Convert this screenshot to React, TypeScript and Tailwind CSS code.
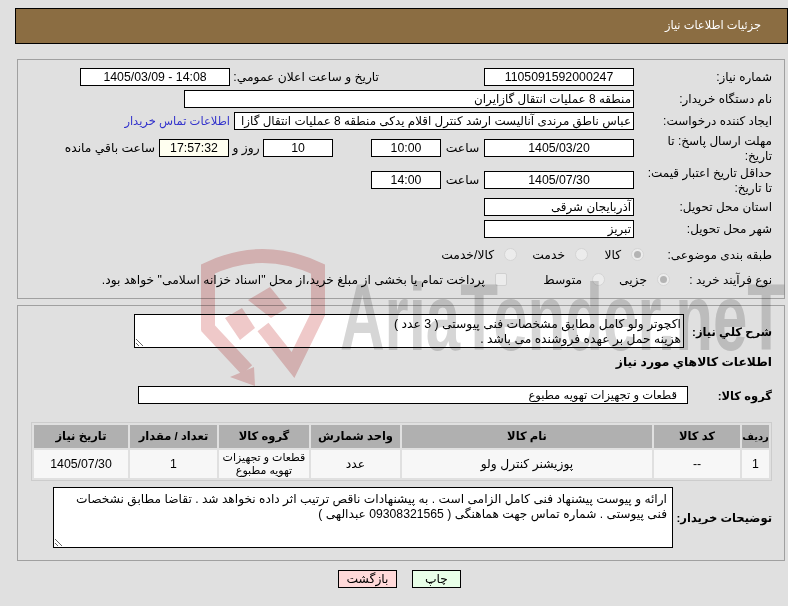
import React from "react";

const font = "font-['Liberation_Sans','DejaVu_Sans',sans-serif]";

function Box({ w, children, center, tint }: { w: string; children?: React.ReactNode; center?: boolean; tint?: boolean }) {
  return (
    <div
      className={`${w} h-[18px] shrink-0 overflow-hidden whitespace-nowrap border border-black px-[2px] leading-[17px] ${
        center ? "text-center" : "text-right text-[11.9px]"
      } ${tint ? "bg-[#fffff0]" : "bg-white"}`}
    >
      {children}
    </div>
  );
}

function Label({ w = "w-[138px]", children, bold }: { w?: string; children: React.ReactNode; bold?: boolean }) {
  return (
    <div className={`${w} shrink-0 whitespace-nowrap pt-[2px] leading-[15px] ${bold ? "text-[11.5px] font-bold" : "text-[12px]"}`}>
      {children}
    </div>
  );
}

function Radio({ checked }: { checked?: boolean }) {
  return (
    <span className="flex h-[13px] w-[13px] shrink-0 items-center justify-center rounded-full border border-[#d4d4d4] bg-[#ececec]">
      {checked && <span className="h-[7px] w-[7px] rounded-full bg-[#b4b4b4]" />}
    </span>
  );
}

function Option({ w, checked, children }: { w: string; checked?: boolean; children: React.ReactNode }) {
  return (
    <div className={`${w} flex shrink-0 items-center gap-[10px] whitespace-nowrap`}>
      <Radio checked={checked} />
      <span className="mt-[3px]">{children}</span>
    </div>
  );
}

const columns = [
  { title: "ردیف", cls: "w-[27px] text-[10px]" },
  { title: "کد کالا", cls: "w-[86px] text-[11.5px]" },
  { title: "نام کالا", cls: "w-[250px] text-[11.5px]" },
  { title: "واحد شمارش", cls: "w-[89px] text-[11.5px]" },
  { title: "گروه کالا", cls: "w-[90px] text-[11.5px]" },
  { title: "تعداد / مقدار", cls: "w-[87px] text-[11.5px]" },
  { title: "تاریخ نیاز", cls: "w-[94px] text-[11.5px]" },
];

// the logo sits over the whole form and darkens what is under it
function Watermark() {
  return (
    <svg
      className="pointer-events-none absolute left-0 top-0 mix-blend-multiply"
      width="788"
      height="606"
      viewBox="0 0 788 606"
    >
      <path d="M208 330 L208 269 Q262 243 318 269 L318 314 L293 365 L263 327" fill="none" stroke="#efc9c9" strokeWidth="14" />
      <path d="M206 326 L247 370" fill="none" stroke="#efc9c9" strokeWidth="14" />
      <polygon fill="#efc9c9" points="230,377 254,367 255,386" />
      <polygon fill="#efc9c9" points="225,318 242,308 255,328 240,340" />
      <polygon fill="#efc9c9" points="248,300 270,287 287,308 271,318" />
      <text
        x="340"
        y="350"
        textLength="445"
        lengthAdjust="spacingAndGlyphs"
        fontFamily="Liberation Sans"
        fontWeight="700"
        fontSize="94"
        fill="#d6d6d6"
      >
        AriaTender.neT
      </text>
    </svg>
  );
}

export default function App() {
  return (
    <div className={`relative h-[606px] w-[788px] overflow-hidden bg-[#e0e0e0] text-[12.3px] text-black ${font}`}>
      <div dir="rtl" className="pt-[8px]">
        {/* Title bar */}
        <div className="flex h-[36px] w-[773px] items-center border border-black bg-[#8b6d42] pr-[26px] text-[11.4px] text-white">
          جزئیات اطلاعات نیاز
        </div>

        {/* Need details */}
        <div className="mr-[3px] mt-[15px] h-[240px] w-[768px] border border-[#a0a0a0] pr-[12px] pt-[5px]">
          <div className="flex h-[23px] items-center">
            <Label>شماره نیاز:</Label>
            <Box w="w-[150px]" center>1105091592000247</Box>
            <div className="w-[105px] shrink-0" />
            <Label w="w-[149px]"><span className="text-[12.3px]">تاريخ و ساعت اعلان عمومي:</span></Label>
            <Box w="w-[150px]" center><span dir="ltr">1405/03/09 - 14:08</span></Box>
          </div>
          <div className="flex h-[21px] items-center">
            <Label>نام دستگاه خریدار:</Label>
            <Box w="w-[450px]">منطقه 8 عملیات انتقال گازایران</Box>
          </div>
          <div className="flex h-[23px] items-center">
            <Label>ایجاد کننده درخواست:</Label>
            <Box w="w-[400px]">عباس ناطق مرندی آنالیست ارشد کنترل اقلام یدکی منطقه 8 عملیات انتقال گازا</Box>
            <span className="mr-[4px] whitespace-nowrap pt-[2px] text-[11.5px] text-[#3333cc]">اطلاعات تماس خریدار</span>
          </div>
          <div className="flex h-[31px] items-center">
            <Label>مهلت ارسال پاسخ: تا<br />تاریخ:</Label>
            <Box w="w-[150px]" center>1405/03/20</Box>
            <div className="w-[43px] shrink-0 pt-[2px] text-center">ساعت</div>
            <Box w="w-[70px]" center>10:00</Box>
            <div className="w-[38px] shrink-0" />
            <Box w="w-[70px]" center>10</Box>
            <div className="w-[34px] shrink-0 pt-[2px] text-center">روز و</div>
            <Box w="w-[70px]" center tint>17:57:32</Box>
            <span className="mr-[4px] whitespace-nowrap pt-[2px]">ساعت باقي مانده</span>
          </div>
          <div className="flex h-[33px] items-center">
            <Label>حداقل تاریخ اعتبار قیمت:<br />تا تاریخ:</Label>
            <Box w="w-[150px]" center>1405/07/30</Box>
            <div className="w-[43px] shrink-0 pt-[2px] text-center">ساعت</div>
            <Box w="w-[70px]" center>14:00</Box>
          </div>
          <div className="flex h-[21px] items-center">
            <Label>استان محل تحویل:</Label>
            <Box w="w-[150px]">آذربایجان شرقی</Box>
          </div>
          <div className="flex h-[23px] items-center">
            <Label>شهر محل تحویل:</Label>
            <Box w="w-[150px]">تبریز</Box>
          </div>
          <div className="flex h-[28px] items-center">
            <Label w="w-[128px]">طبقه بندی موضوعی:</Label>
            <Option w="w-[56px]" checked>کالا</Option>
            <Option w="w-[71px]">خدمت</Option>
            <Option w="w-[80px]">کالا/خدمت</Option>
          </div>
          <div className="flex h-[22px] items-center">
            <Label w="w-[102px]">نوع فرآیند خرید :</Label>
            <Option w="w-[65px]" checked>جزیی</Option>
            <Option w="w-[98px]">متوسط</Option>
            <div className="flex items-center gap-[10px] whitespace-nowrap">
              <span className="h-[13px] w-[12px] shrink-0 rounded-[2px] border border-[#d0d0d0] bg-[#ececec]" />
              <span className="mt-[3px]">پرداخت تمام یا بخشی از مبلغ خرید،از محل "اسناد خزانه اسلامی" خواهد بود.</span>
            </div>
          </div>
        </div>

        {/* Goods */}
        <div className="mr-[3px] mt-[6px] h-[256px] w-[768px] border border-[#a0a0a0] pr-[12px] pt-[8px]">
          <div className="flex items-center">
            <Label w="w-[88px]" bold>شرح كلي نياز:</Label>
            <textarea
              readOnly
              dir="rtl"
              className="block h-[34px] w-[550px] resize overflow-hidden border border-black bg-white px-[2px] pt-[2px] text-[12.3px] leading-[15px] outline-none"
              value={"اکچوتر ولو کامل مطابق مشخصات فنی پیوستی ( 3 عدد )\nهزینه حمل بر عهده فروشنده می باشد ."}
            />
          </div>
          <div className="mt-[7px] font-bold leading-[15px]">اطلاعات كالاهاي مورد نياز</div>
          <div className="mt-[16px] flex items-center">
            <Label w="w-[84px]" bold>گروه کالا:</Label>
            <div className="h-[18px] w-[550px] border border-black bg-white pr-[10px] text-[11.5px] leading-[17px]">قطعات و تجهیزات تهویه مطبوع</div>
          </div>
          <table className="mt-[18px] w-[741px] table-fixed border-separate border-spacing-[2px] border border-[#cccccc] text-center">
            <thead>
              <tr className="h-[23px]">
                {columns.map(c => (
                  <th key={c.title} className={`${c.cls} whitespace-nowrap bg-[#b0b0b0] p-0 font-bold`}>{c.title}</th>
                ))}
              </tr>
            </thead>
            <tbody>
              <tr className="h-[28px] bg-[#f7f7f7] leading-[13px]">
                <td className="p-0">1</td>
                <td className="p-0">--</td>
                <td className="p-0">پوزیشنر کنترل ولو</td>
                <td className="p-0">عدد</td>
                <td className="whitespace-nowrap p-0 text-[11px]">قطعات و تجهیزات<br />تهویه مطبوع</td>
                <td className="p-0">1</td>
                <td className="p-0">1405/07/30</td>
              </tr>
            </tbody>
          </table>
          <div className="mt-[6px] flex items-center">
            <Label w="w-[99px]" bold>توضیحات خریدار:</Label>
            <textarea
              readOnly
              dir="rtl"
              className="block h-[61px] w-[620px] resize overflow-hidden border border-black bg-white pl-[2px] pr-[5px] pt-[4px] text-[12.2px] leading-[15px] outline-none"
              value={"ارائه و پیوست پیشنهاد فنی کامل الزامی است . به پیشنهادات ناقص ترتیب اثر داده نخواهد شد . تقاضا مطابق نشخصات\nفنی پیوستی . شماره تماس جهت هماهنگی ( 09308321565 عبدالهی )"}
            />
          </div>
        </div>

        {/* Actions */}
        <div className="mt-[9px] flex justify-center gap-[15px] pl-[11px]">
          <button className="h-[18px] w-[49px] border border-black bg-[#e8ffe8] text-[12.3px] leading-[16px]">چاپ</button>
          <button className="h-[18px] w-[59px] border border-black bg-[#ffd9d9] text-[12.3px] leading-[16px]">بازگشت</button>
        </div>
      </div>
      <Watermark />
    </div>
  );
}
